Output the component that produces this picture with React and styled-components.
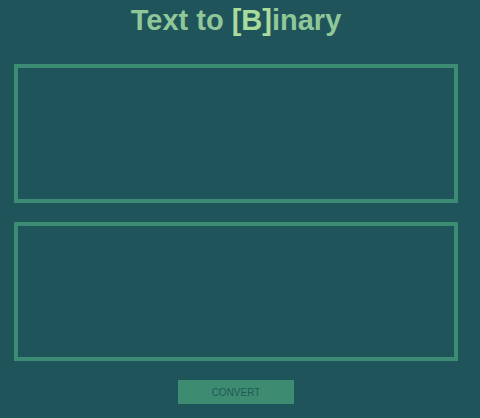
import React, { useState } from "react";
import styled, { createGlobalStyle } from "styled-components";

const GlobalStyle = createGlobalStyle`
  html, body {
    margin: 0;
    padding: 0;
    background: #1f545b;
    font-family: "Liberation Sans", Arial, sans-serif;
  }
`;

const Page = styled.div`
  width: 472px;
  height: 418px;
  display: flex;
  flex-direction: column;
  align-items: center;
  background: #1f545b;
`;

const Title = styled.h1`
  margin: 0;
  padding-top: 4px;
  font-size: 29px;
  line-height: 32px;
  font-weight: bold;
  color: #8fc799;
`;

const Bracket = styled.span`
  color: #a9dc9c;
`;

const Field = styled.textarea`
  box-sizing: border-box;
  width: 444px;
  height: 139px;
  margin-top: ${({ $top }) => $top}px;
  border: 4px solid #3b8c72;
  background: transparent;
  color: #a9dc9c;
  font-family: "Liberation Sans", Arial, sans-serif;
  font-size: 14px;
  resize: none;
  outline: none;
  padding: 6px;
`;

const Button = styled.button`
  margin-top: 19px;
  width: 116px;
  height: 24px;
  border: none;
  background: #3d8b71;
  color: #235a59;
  font-family: "Liberation Sans", Arial, sans-serif;
  font-size: 10px;
  text-transform: uppercase;
  cursor: pointer;
`;

const toBinary = (text) =>
  text
    .split("")
    .map((c) => c.charCodeAt(0).toString(2).padStart(8, "0"))
    .join(" ");

export default function App() {
  const [input, setInput] = useState("");
  const [output, setOutput] = useState("");

  return (
    <Page>
      <GlobalStyle />
      <Title>
        Text to <Bracket>[B]</Bracket>inary
      </Title>
      <Field $top={28} value={input} onChange={(e) => setInput(e.target.value)} />
      <Field $top={19} value={output} readOnly />
      <Button onClick={() => setOutput(toBinary(input))}>Convert</Button>
    </Page>
  );
}
